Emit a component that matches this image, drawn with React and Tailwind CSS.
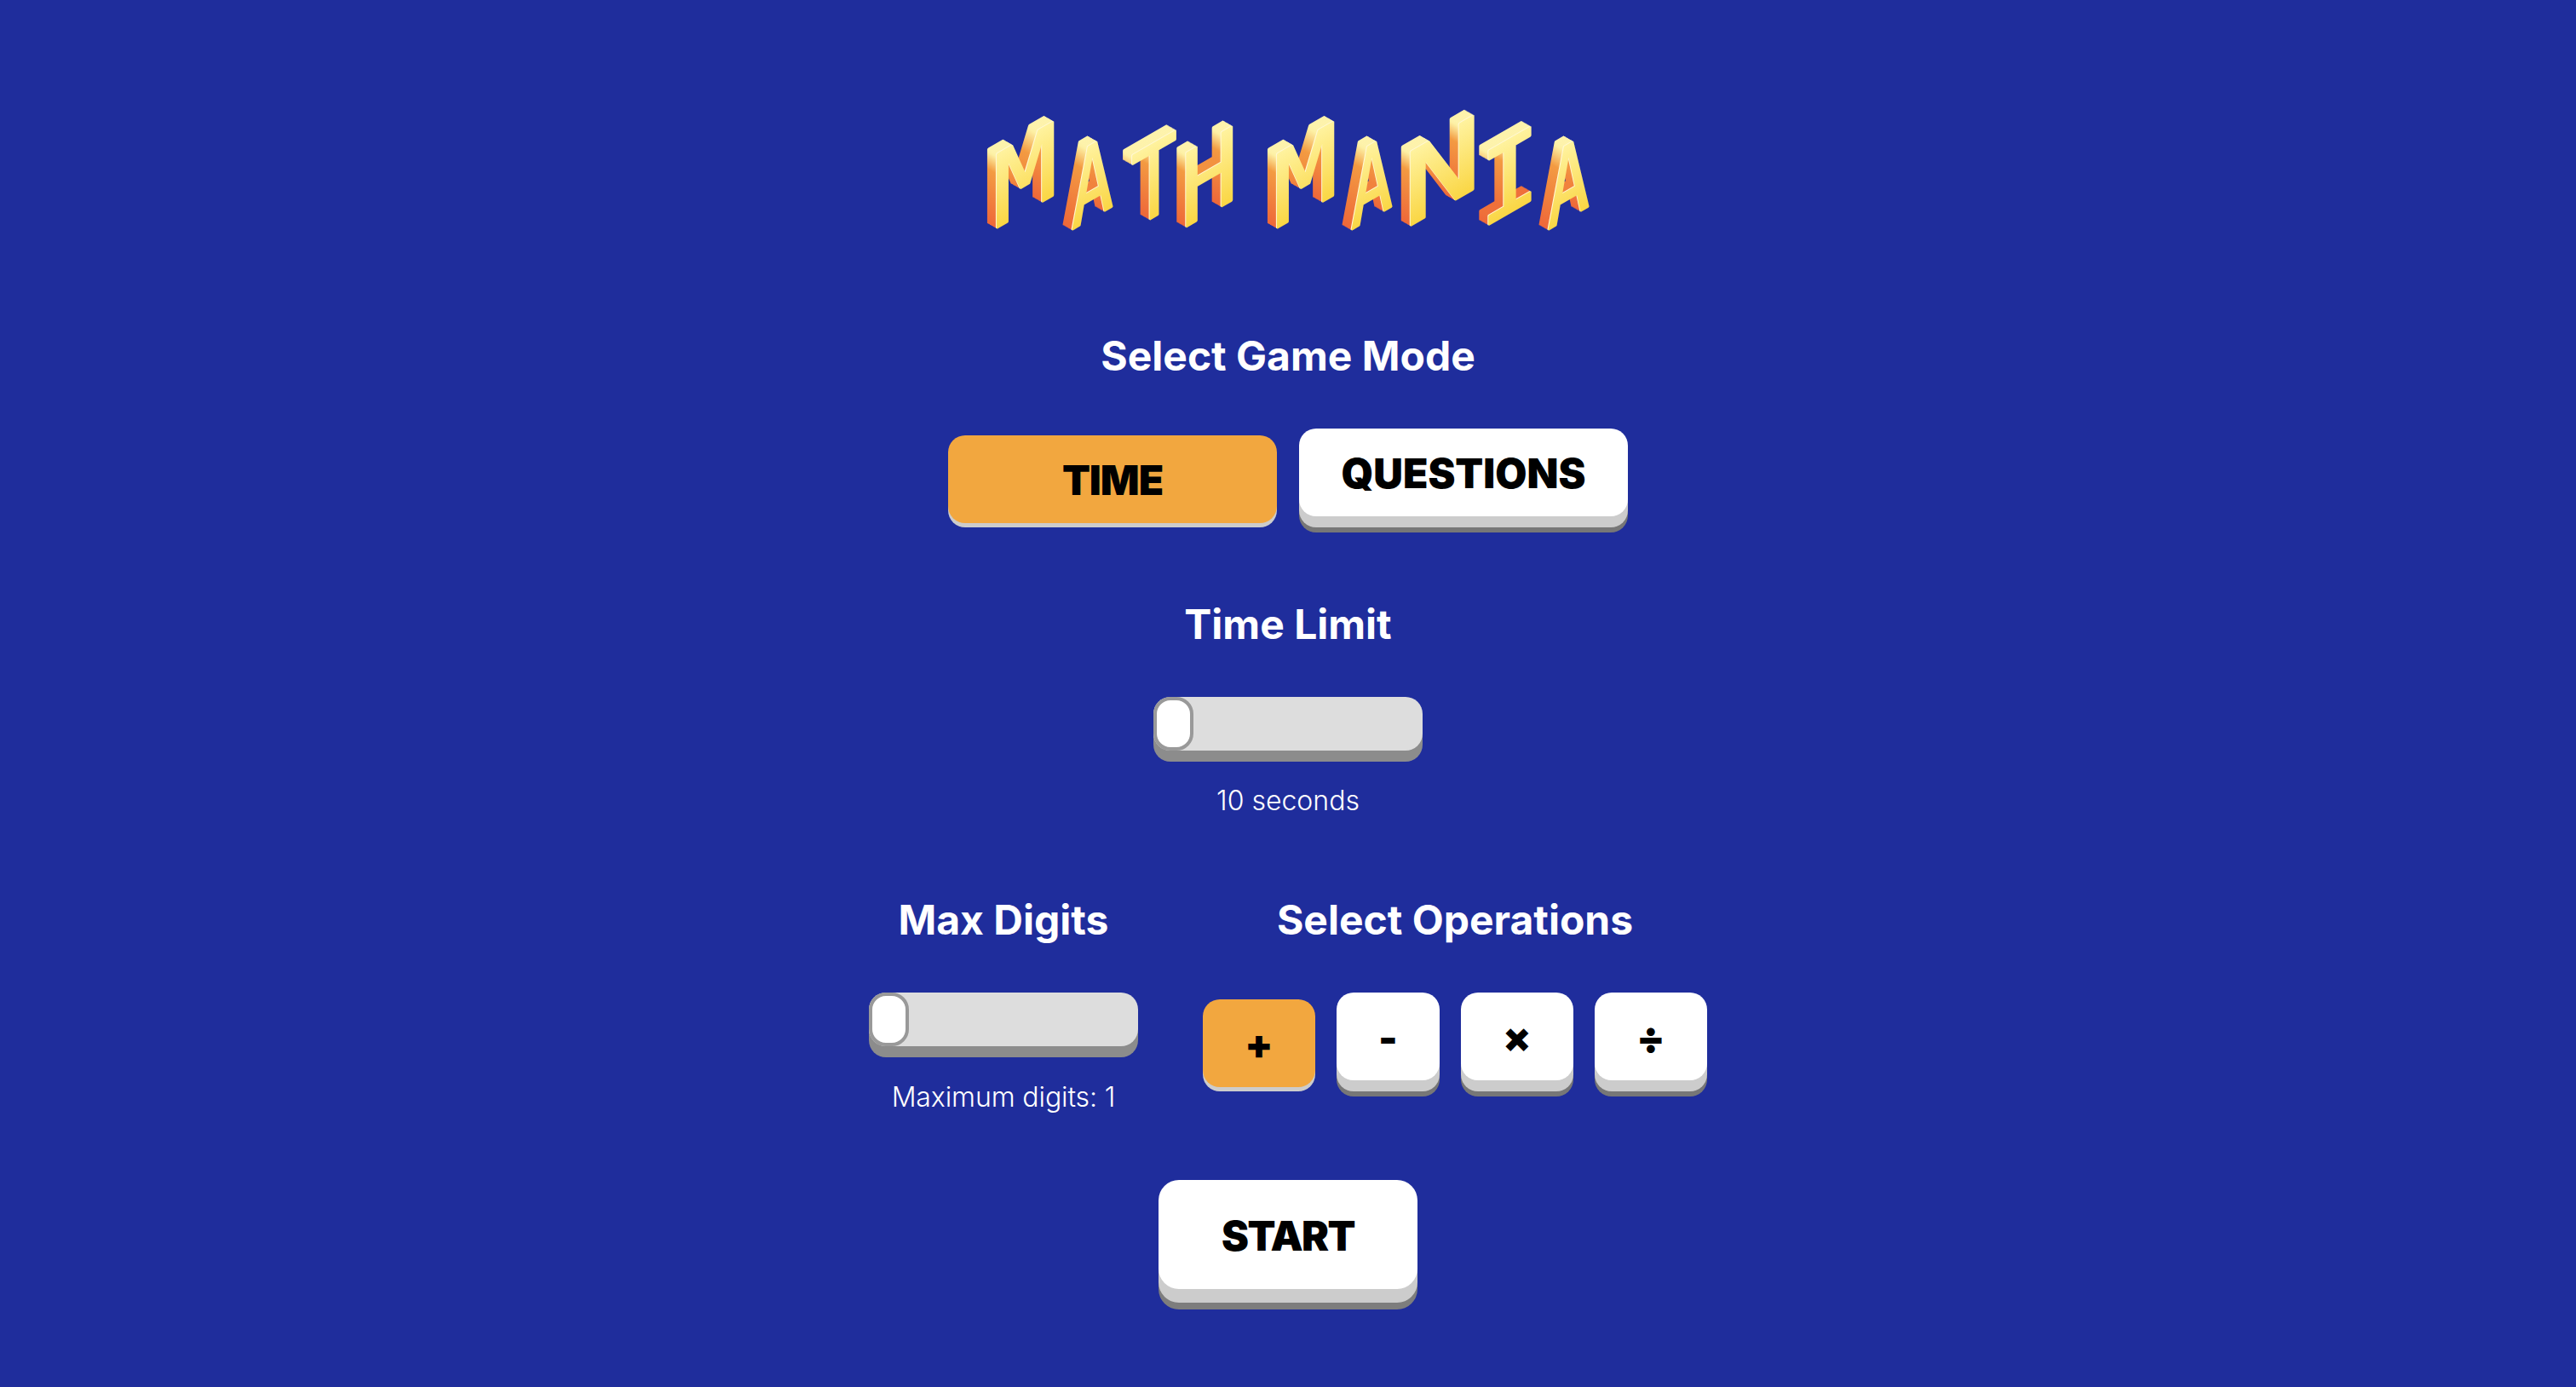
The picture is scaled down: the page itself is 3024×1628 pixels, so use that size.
const LETTERS = [
  { c: "M", x: 1166, sx: 1.06 },
  { c: "A", x: 1258, sx: 0.69 },
  { c: "T", x: 1328, sx: 0.76 },
  { c: "H", x: 1386, sx: 0.95 },
  { c: "M", x: 1495, sx: 1.06 },
  { c: "A", x: 1586, sx: 0.69 },
  { c: "N", x: 1647, sx: 1.3 },
  { c: "I", x: 1737, sx: 1.0 },
  { c: "A", x: 1817, sx: 0.69 },
];
const DEPTH = [11, 10, 9, 8, 7, 6, 5, 4, 3, 2];

function Logo() {
  return (
    <svg width="800" height="180" viewBox="1112 110 800 180" className="block overflow-visible">
      <defs>
        <linearGradient id="face" gradientUnits="userSpaceOnUse" x1="0" y1="-90" x2="0" y2="0">
          <stop offset="0" stopColor="#fff3a0" />
          <stop offset="1" stopColor="#fad644" />
        </linearGradient>
        <linearGradient id="side" gradientUnits="userSpaceOnUse" x1="0" y1="-100" x2="0" y2="0">
          <stop offset="0" stopColor="#fffbc4" />
          <stop offset="0.16" stopColor="#fdf0a4" />
          <stop offset="0.36" stopColor="#f39b42" />
          <stop offset="1" stopColor="#ee6739" />
        </linearGradient>
      </defs>
      {LETTERS.map((l, i) => {
        const id = `logo-letter-${i}`;
        return (
          <g key={i} transform={`matrix(1 -0.577 0 1 ${l.x} 271)`}>
            {DEPTH.map((k) => (
              <use key={k} href={`#${id}`} x={-k} y={-1.154 * k} style={{ "--f": "url(#side)" }} />
            ))}
            <use href={`#${id}`} x={-1} y={-1.154} style={{ "--f": "#fff8d6" }} />
            <g style={{ "--f": "url(#face)" }}>
              <text
                id={id}
                transform={`scale(${l.sx} 1)`}
                x="0"
                y="-1"
                fontFamily="'DejaVu Sans Mono', monospace"
                fontWeight="400"
                fontSize="118"
                fill="var(--f)"
                stroke="var(--f)"
                strokeWidth="2.5"
                strokeLinejoin="round"
              >
                {l.c}
              </text>
            </g>
          </g>
        );
      })}
    </svg>
  );
}

function Heading({ children }) {
  return <h2 className="text-[48px] leading-[58px] font-bold text-white text-center">{children}</h2>;
}

function Slider() {
  return (
    <div className="flex w-[316px] h-[63px] rounded-[20px] bg-[#dddddd] shadow-[0_13px_0_#8c8c8c]">
      <div className="w-[47px] h-full rounded-[20px] border-[4px] border-[#999999] bg-white" />
    </div>
  );
}

function Key({ active, className, children }) {
  return (
    <button
      className={
        "h-[103px] pt-[3px] rounded-[20px] text-[48px] leading-none font-black text-black flex items-center justify-center " +
        (active
          ? "bg-[#f2a73f] translate-y-2 shadow-[0_5px_0_#cccccc] "
          : "bg-white shadow-[0_13px_0_#cccccc,0_19px_0_#777777] ") +
        className
      }
    >
      {children}
    </button>
  );
}

export default function App() {
  return (
    <div className="min-h-screen bg-[#1f2d9c] flex flex-col items-center pt-[110px] font-['Inter',sans-serif]">
      <Logo />
      <div className="mt-[99px]">
        <Heading>Select Game Mode</Heading>
      </div>
      <div className="mt-[56px] flex gap-[26px]">
        <Key active className="w-[386px] tracking-[-1px]">TIME</Key>
        <Key className="w-[386px]">QUESTIONS</Key>
      </div>
      <div className="mt-[98px]">
        <Heading>Time Limit</Heading>
      </div>
      <div className="mt-[56px]">
        <Slider />
      </div>
      <p className="mt-[39px] text-[32px] leading-[40px] font-light text-white">10 seconds</p>
      <div className="mt-[91px] flex gap-[76px]">
        <div className="w-[316px] flex flex-col items-center">
          <Heading>Max Digits</Heading>
          <div className="mt-[56px]">
            <Slider />
          </div>
          <p className="mt-[40px] text-[32px] leading-[40px] font-light tracking-[-0.1px] text-white">Maximum digits: 1</p>
        </div>
        <div className="w-[592px] flex flex-col items-center">
          <Heading>Select Operations</Heading>
          <div className="mt-[56px] flex gap-[25px]">
            <Key active className="w-[132px]">+</Key>
            <Key className="w-[121px]">-</Key>
            <Key className="w-[132px]">×</Key>
            <Key className="w-[132px]">÷</Key>
          </div>
        </div>
      </div>
      <button className="mt-[77px] w-[304px] h-[128px] pt-[3px] rounded-[24px] bg-white text-[48px] leading-none font-black tracking-[-1.5px] text-black shadow-[0_16px_0_#cccccc,0_24px_0_#7d7d7d]">
        START
      </button>
    </div>
  );
}
